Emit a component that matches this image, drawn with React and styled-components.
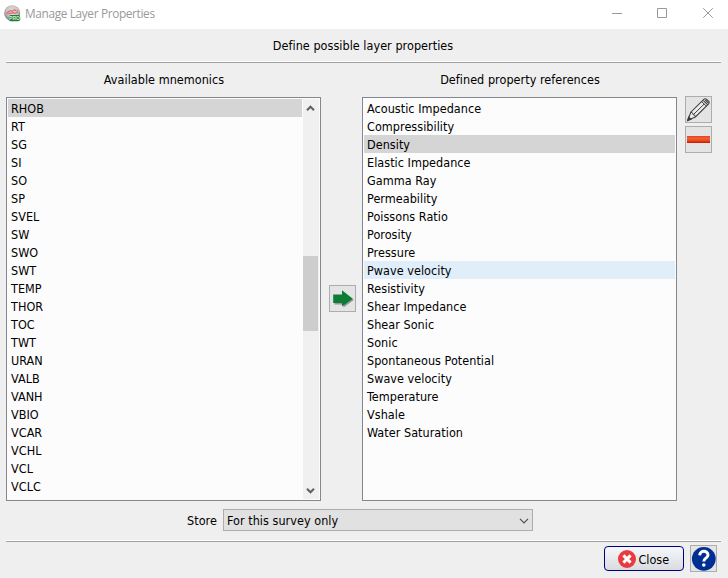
import React from "react";
import styled, { createGlobalStyle } from "styled-components";

const GlobalStyle = createGlobalStyle`
  * { box-sizing: border-box; }
  body { margin: 0; background: #f0f0f0; }
`;

const Dialog = styled.main`
  width: 728px;
  height: 578px;
  overflow: hidden;
  background: #efefef;
  color: #000;
  font: 12.5px/18px "DejaVu Sans Condensed", "DejaVu Sans", sans-serif;
  font-stretch: condensed;
  letter-spacing: 0.04px;
  display: flex;
  flex-direction: column;
`;

const TitleBar = styled.header`
  height: 29px;
  flex: none;
  background: #fff;
  color: #999;
  display: flex;
  align-items: center;
  padding: 0 13px 2px 4px;
  font: 11.8px/18px "Open Sans", "Noto Sans", sans-serif;
`;

const AppIcon = styled.svg`
  width: 17px;
  height: 17px;
  margin-right: 4px;
`;

const Title = styled.h1`
  flex: 1;
  margin: 0;
  padding-bottom: 2px;
  font: inherit;
  letter-spacing: -0.33px;
`;

const WindowControls = styled.div`
  width: 112px;
  height: 27px;
  flex: none;
`;

const Heading = styled.h2`
  margin: 0;
  height: 32px;
  flex: none;
  padding: 8px 2px 0 0;
  font: inherit;
  text-align: center;
`;

const Rule = styled.hr`
  width: 715px;
  height: 2px;
  flex: none;
  margin: 0 0 0 6px;
  border: 0;
  border-top: 1px solid #fff;
  background: #a0a0a0;
`;

const Body = styled.section`
  flex: none;
  height: 438px;
  display: grid;
  grid-template-columns: 323px 33px 323px 27px;
  padding-left: 6px;
`;

const Column = styled.div`
  width: 315px;
  display: flex;
  flex-direction: column;
`;

const ColumnTitle = styled.h3`
  margin: 0;
  height: 34px;
  padding: 8px 0 0 1px;
  font: inherit;
  text-align: center;
`;

const ListBox = styled.div`
  height: 404px;
  border: 1px solid #828790;
  background: #fcfcfc;
  padding: 1px;
  display: flex;
`;

const Items = styled.ul`
  list-style: none;
  margin: 0;
  padding: 0;
  flex: 1;
`;

const rowColors = { selected: "#d5d5d5", hover: "#e0eefa" };

const Item = styled.li`
  height: 18px;
  padding-left: 3px;
  padding-top: 1px;
  line-height: 17px;
  white-space: nowrap;
  background: ${(p) => rowColors[p.$state] || "transparent"};
`;

const ScrollBar = styled.div`
  width: 16px;
  margin-left: 1px;
  background: #f0f0f0;
  display: flex;
  flex-direction: column;
  align-items: flex-start;
`;

const ScrollArrow = styled.svg`
  width: 15px;
  height: 17px;
  flex: none;
`;

const ScrollThumb = styled.div`
  width: 15px;
  height: 75px;
  margin-top: ${(p) => p.$offset}px;
  margin-bottom: auto;
  background: #cdcdcd;
`;

const ActionStack = styled.div`
  display: flex;
  flex-direction: column;
  gap: 3px;
  padding-top: ${(p) => p.$top}px;
`;

const ToolButton = styled.button`
  width: 27px;
  height: 27px;
  flex: none;
  padding: 0;
  border: 1px solid #adadad;
  background: #e4e4e4;
  svg { display: block; width: 25px; height: 25px; }
`;

const StoreRow = styled.div`
  height: 39px;
  flex: none;
  display: flex;
  align-items: flex-start;
  padding: 8px 0 0 187px;
`;

const StoreLabel = styled.label`
  width: 36px;
  line-height: 24px;
`;

const Select = styled.div`
  width: 310px;
  height: 22px;
  border: 1px solid #adadad;
  background: #e1e1e1;
  display: flex;
  align-items: center;
  justify-content: space-between;
  padding: 1px 3px 0;
  svg { width: 10px; height: 6px; }
`;

const Footer = styled.footer`
  display: flex;
  justify-content: flex-end;
  gap: 6px;
  padding: 3px 11px 0 0;
`;

const CloseButton = styled.button`
  width: 80px;
  height: 25px;
  margin-top: 1px;
  padding: 2px 0 0 12.5px;
  display: flex;
  align-items: center;
  gap: 3px;
  border: 1px solid #00007f;
  border-radius: 4px;
  background: linear-gradient(#f6f7fa, #dadbde);
  color: #000;
  font: inherit;
  svg { width: 18px; height: 18px; flex: none; margin-top: -2px; }
`;

const mnemonics = "RHOB RT SG SI SO SP SVEL SW SWO SWT TEMP THOR TOC TWT URAN VALB VANH VBIO VCAR VCHL VCL VCLC".split(" ");
const properties = [
  "Acoustic Impedance", "Compressibility", "Density", "Elastic Impedance", "Gamma Ray",
  "Permeability", "Poissons Ratio", "Porosity", "Pressure", "Pwave velocity", "Resistivity",
  "Shear Impedance", "Shear Sonic", "Sonic", "Spontaneous Potential", "Swave velocity",
  "Temperature", "Vshale", "Water Saturation",
];
const propertyState = { Density: "selected", "Pwave velocity": "hover" };

function Logo() {
  return (
    <AppIcon viewBox="0 0 17 17">
      <defs>
        <radialGradient id="ball" cx="50%" cy="40%">
          <stop offset="0" stopColor="#e6dcdc" />
          <stop offset=".7" stopColor="#cbcaca" />
          <stop offset="1" stopColor="#8d9090" />
        </radialGradient>
      </defs>
      <circle cx="8.2" cy="8.2" r="8" fill="url(#ball)" />
      <path d="M2.5 8l2.5-1.6 2-.8 1.5.8 2-1.6 1.5 1 2 .4M3 9.2l3-.9 3-.6 2 .6 3-.8" fill="none" stroke="#e2666c" strokeWidth="1.2" />
      <rect x="4.8" y="10" width="11.4" height="6.2" rx="2" fill="#1e7f3b" />
      <text x="10.5" y="15" textAnchor="middle" fontSize="5" fontWeight="700" letterSpacing="0" fontFamily="Liberation Sans, sans-serif" fill="#d6f0d9">PRO</text>
    </AppIcon>
  );
}

function Pencil() {
  return (
    <svg viewBox="0 0 25 25" fill="none" stroke="#404040" strokeWidth="1.1">
      <path d="M1.8 23.2L4.8 15.2 17.8 2.4Q19 1.2 20.4 2.2L22.8 4.4Q23.8 5.6 22.6 6.8L9.4 20Z" fill="#ececec" />
      <path d="M4.8 15.2l1.8.8.6 1.8 1.7.4.5 1.8M15.6 4.6l4.8 4.6M7.4 17.6L18.2 7" strokeWidth="1" />
      <path d="M1.6 23.5l1.1-3.4 2.3 2.2z" fill="#222" />
      <path d="M17.4 3.6l4.4 4.2M19.2 3l3.2 3" strokeWidth="1.1" />
    </svg>
  );
}

export default function App() {
  return (
    <>
      <GlobalStyle />
      <Dialog>
        <TitleBar>
          <Logo />
          <Title>Manage Layer Properties</Title>
          <WindowControls>
            <svg width="112" height="26" viewBox="0 0 112 26" fill="none" stroke="#999">
              <path d="M9 13.5h10" />
              <path d="M54.5 8.5h9v9h-9z" />
              <path d="M100.2 8.2l9.6 9.6M109.8 8.2l-9.6 9.6" />
            </svg>
          </WindowControls>
        </TitleBar>
        <Heading>Define possible layer properties</Heading>
        <Rule />
        <Body>
          <Column>
            <ColumnTitle>Available mnemonics</ColumnTitle>
            <ListBox>
              <Items>
                {mnemonics.map((m, i) => (
                  <Item key={m} $state={i === 0 ? "selected" : ""}>{m}</Item>
                ))}
              </Items>
              <ScrollBar>
                <ScrollArrow viewBox="0 0 15 17">
                  <path d="M4 11.2L7.5 7.7 11 11.2" fill="none" stroke="#606060" strokeWidth="2" />
                </ScrollArrow>
                <ScrollThumb $offset={140} />
                <ScrollArrow viewBox="0 0 15 17">
                  <path d="M4 6.8L7.5 10.3 11 6.8" fill="none" stroke="#606060" strokeWidth="2" />
                </ScrollArrow>
              </ScrollBar>
            </ListBox>
          </Column>
          <ActionStack $top={222}>
            <ToolButton aria-label="Add">
              <svg viewBox="0 0 25 25">
                <path d="M4.5 10h8.5V6L23.8 14 13.5 21.5V18.4h-9z" fill="#666" opacity=".6" />
                <path d="M3.2 8.4H12V4.2L22.8 12.8 12 20.4V17H3.2z" fill="#0c7c36" />
              </svg>
            </ToolButton>
          </ActionStack>
          <Column>
            <ColumnTitle>Defined property references</ColumnTitle>
            <ListBox>
              <Items>
                {properties.map((p) => (
                  <Item key={p} $state={propertyState[p]}>{p}</Item>
                ))}
              </Items>
            </ListBox>
          </Column>
          <ActionStack $top={33}>
            <ToolButton aria-label="Edit"><Pencil /></ToolButton>
            <ToolButton aria-label="Remove">
              <svg viewBox="0 0 25 25">
                <defs>
                  <linearGradient id="bar" x1="0" y1="0" x2="0" y2="1">
                    <stop offset="0" stopColor="#dc4424" />
                    <stop offset=".3" stopColor="#f2602e" />
                    <stop offset=".6" stopColor="#ee5020" />
                    <stop offset="1" stopColor="#c41806" />
                  </linearGradient>
                </defs>
                <rect x="1" y="9" width="23" height="7" fill="url(#bar)" />
              </svg>
            </ToolButton>
          </ActionStack>
        </Body>
        <StoreRow>
          <StoreLabel>Store</StoreLabel>
          <Select>
            For this survey only
            <svg viewBox="0 0 10 6"><path d="M1 .8L5 4.8 9 .8" fill="none" stroke="#505050" strokeWidth="1.2" /></svg>
          </Select>
        </StoreRow>
        <Rule />
        <Footer>
          <CloseButton>
            <svg viewBox="0 0 18 18">
              <circle cx="9" cy="9" r="9" fill="#e93a3f" />
              <path d="M5.4 5.4l7.2 7.2M12.6 5.4l-7.2 7.2" stroke="#fff" strokeWidth="3" />
            </svg>
            Close
          </CloseButton>
          <ToolButton aria-label="Help">
            <svg viewBox="0 0 25 25">
              <circle cx="12.8" cy="12.8" r="11.9" fill="#002f94" />
              <path d="M8.7 9.4C8.8 3.9 17 4.2 17 8.9c0 3.3-4.2 3.2-4.2 6.5" fill="none" stroke="#fff" strokeWidth="3" />
              <circle cx="12.8" cy="19" r="1.8" fill="#fff" />
            </svg>
          </ToolButton>
        </Footer>
      </Dialog>
    </>
  );
}
